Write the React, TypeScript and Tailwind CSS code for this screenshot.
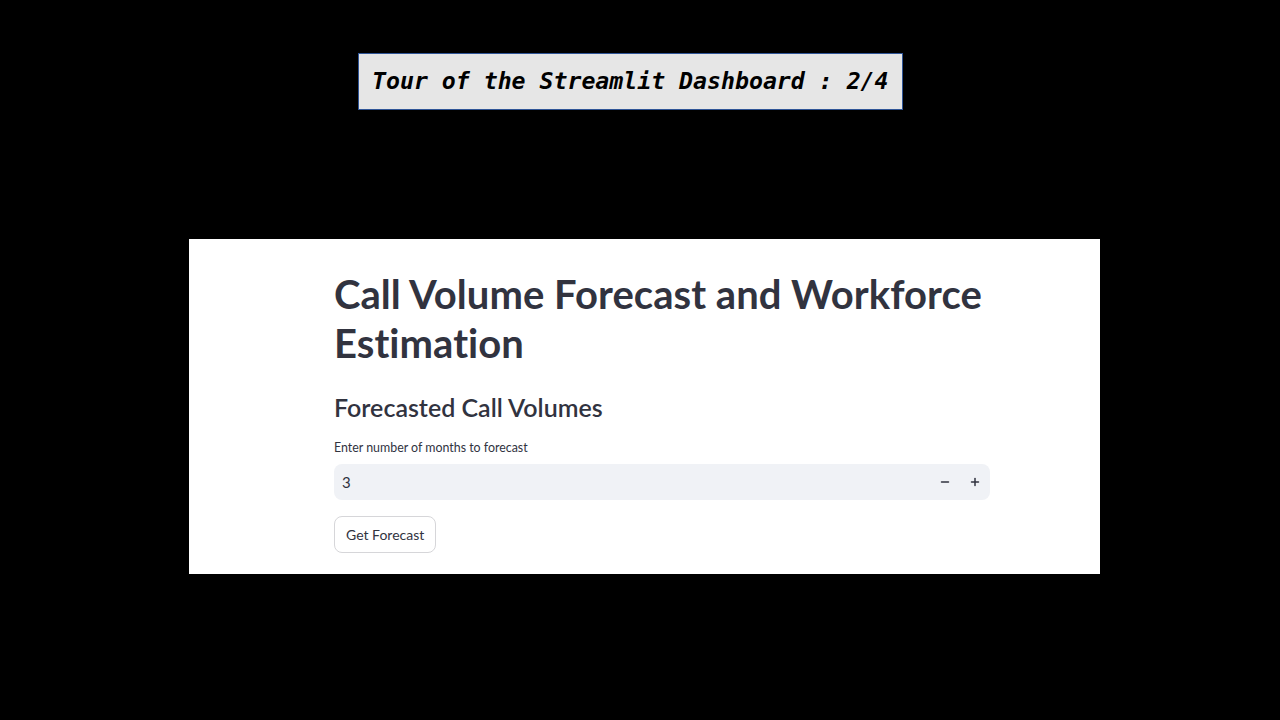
import { Minus, Plus } from 'lucide-react';

const App = () => {
  return (
    <div className="w-[1280px] h-[720px] bg-black overflow-hidden">
      <div className="pt-[53px] pl-[358px]">
        <div className="w-[545px] h-[57px] bg-[#e6e6e6] border border-[#2f5597] flex items-center pl-[13px]">
          <span className="text-[23.2px] italic font-bold text-black" style={{ fontFamily: '"DejaVu Sans Mono", monospace' }}>
            Tour of the Streamlit Dashboard : 2/4
          </span>
        </div>
      </div>

      <div
        className="mt-[129px] ml-[189px] w-[911px] h-[335px] bg-white pl-[145px] pr-[110px] pt-[31px] [font-variant-ligatures:none]"
        style={{ fontFamily: 'Lato, "Noto Sans", sans-serif' }}
      >
        <h1 className="text-[40px] leading-[49px] font-bold text-[#31333f] tracking-[0.05px]">
          Call Volume Forecast and Workforce Estimation
        </h1>
        <h2 className="mt-[24px] text-[25px] leading-[30px] font-semibold text-[#31333f]">Forecasted Call Volumes</h2>
        <div className="mt-[17px] text-[12.4px] leading-[18px] text-[#31333f]">Enter number of months to forecast</div>
        <div className="mt-[7px] h-[36px] bg-[#f0f2f6] rounded-lg flex items-center pl-2 text-[15px] text-[#31333f]">
          <span className="flex-1">3</span>
          <div className="flex items-center">
            <span className="w-[30px] flex justify-center">
              <Minus className="w-3 h-3" strokeWidth={3} />
            </span>
            <span className="w-[30px] flex justify-center">
              <Plus className="w-3 h-3" strokeWidth={3} />
            </span>
          </div>
        </div>
        <button className="mt-[16px] h-[37px] px-[11px] border border-[#d6d6d9] rounded-lg bg-white text-[14px] text-[#31333f]">
          Get Forecast
        </button>
      </div>
    </div>
  );
};

export default App;
